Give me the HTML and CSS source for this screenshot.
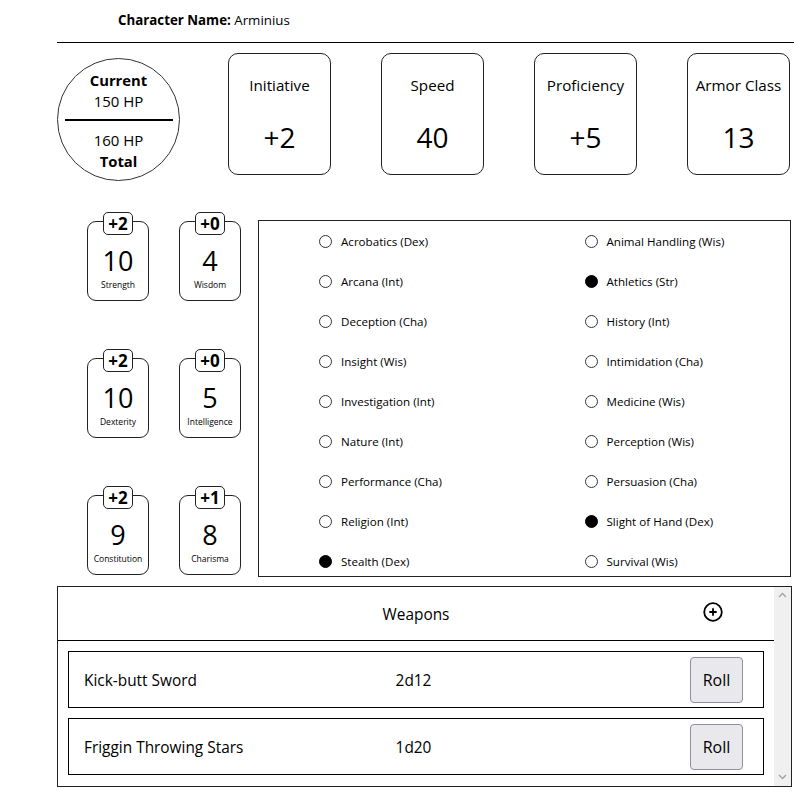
FILE: index.html
```html
<!DOCTYPE html>
<html lang="en">
<head>
<meta charset="utf-8">
<title>Character Sheet</title>
<link rel="stylesheet" href="styles.css">
</head>
<body>
<div class="page">
  <header class="name-bar"><span class="name-label">Character Name:</span> Arminius</header>

  <section class="top-row">
    <div class="hp">
      <b>Current</b>
      <span>150 HP</span>
      <div class="hp-line"></div>
      <span>160 HP</span>
      <b>Total</b>
    </div>
    <div class="stats">
      <div class="stat"><div class="stat-label">Initiative</div><div class="stat-value">+2</div></div>
      <div class="stat"><div class="stat-label">Speed</div><div class="stat-value">40</div></div>
      <div class="stat"><div class="stat-label">Proficiency</div><div class="stat-value">+5</div></div>
      <div class="stat"><div class="stat-label">Armor Class</div><div class="stat-value">13</div></div>
    </div>
  </section>

  <section class="mid-row">
    <div class="abilities">
      <div class="ability"><div class="mod">+2</div><div class="score">10</div><div class="ability-name">Strength</div></div>
      <div class="ability"><div class="mod">+0</div><div class="score">4</div><div class="ability-name">Wisdom</div></div>
      <div class="ability"><div class="mod">+2</div><div class="score">10</div><div class="ability-name">Dexterity</div></div>
      <div class="ability"><div class="mod">+0</div><div class="score">5</div><div class="ability-name">Intelligence</div></div>
      <div class="ability"><div class="mod">+2</div><div class="score">9</div><div class="ability-name">Constitution</div></div>
      <div class="ability"><div class="mod">+1</div><div class="score">8</div><div class="ability-name">Charisma</div></div>
    </div>
    <div class="skills">
      <div class="skill"><span class="radio"></span>Acrobatics (Dex)</div>
      <div class="skill"><span class="radio"></span>Animal Handling (Wis)</div>
      <div class="skill"><span class="radio"></span>Arcana (Int)</div>
      <div class="skill"><span class="radio on"></span>Athletics (Str)</div>
      <div class="skill"><span class="radio"></span>Deception (Cha)</div>
      <div class="skill"><span class="radio"></span>History (Int)</div>
      <div class="skill"><span class="radio"></span>Insight (Wis)</div>
      <div class="skill"><span class="radio"></span>Intimidation (Cha)</div>
      <div class="skill"><span class="radio"></span>Investigation (Int)</div>
      <div class="skill"><span class="radio"></span>Medicine (Wis)</div>
      <div class="skill"><span class="radio"></span>Nature (Int)</div>
      <div class="skill"><span class="radio"></span>Perception (Wis)</div>
      <div class="skill"><span class="radio"></span>Performance (Cha)</div>
      <div class="skill"><span class="radio"></span>Persuasion (Cha)</div>
      <div class="skill"><span class="radio"></span>Religion (Int)</div>
      <div class="skill"><span class="radio on"></span>Slight of Hand (Dex)</div>
      <div class="skill"><span class="radio on"></span>Stealth (Dex)</div>
      <div class="skill"><span class="radio"></span>Survival (Wis)</div>
    </div>
  </section>

  <section class="weapons">
    <div class="weapons-main">
      <div class="weapons-head">
        <span></span>
        <span class="weapons-title">Weapons</span>
        <svg class="add-icon" width="20" height="20" viewBox="0 0 20 20" aria-label="Add weapon">
          <circle cx="10" cy="10" r="8.8" fill="none" stroke="#000" stroke-width="1.8"/>
          <path d="M10 6.3V13.7M6.3 10H13.7" stroke="#000" stroke-width="1.8" fill="none"/>
        </svg>
      </div>
      <div class="weapon-list">
        <div class="weapon">
          <span class="weapon-name">Kick-butt Sword</span>
          <span class="weapon-dmg">2d12</span>
          <button class="roll">Roll</button>
        </div>
        <div class="weapon">
          <span class="weapon-name">Friggin Throwing Stars</span>
          <span class="weapon-dmg">1d20</span>
          <button class="roll">Roll</button>
        </div>
      </div>
    </div>
    <div class="scrollbar">
      <svg width="9" height="6" viewBox="0 0 9 6"><path d="M1 5L4.5 1.5L8 5" fill="none" stroke="#a3a3a3" stroke-width="1.4"/></svg>
      <svg width="9" height="6" viewBox="0 0 9 6"><path d="M1 1L4.5 4.5L8 1" fill="none" stroke="#a3a3a3" stroke-width="1.4"/></svg>
    </div>
  </section>
</div>
</body>
</html>
```

FILE: styles.css
```css
* { box-sizing: border-box; }

body {
  margin: 0;
  background: #fff;
  color: #000;
  font-family: "Open Sans", "Noto Sans", sans-serif;
}

.page {
  width: 794px;
  padding-left: 57px;
}

.name-bar {
  height: 43px;
  border-bottom: 1px solid #000;
  padding-left: 61px;
  padding-top: 10px;
  font-size: 13.3px;
  line-height: 20px;
}

.name-label { font-weight: 700; }

.top-row {
  display: flex;
  align-items: flex-start;
  margin-top: 10px;
}

.hp {
  width: 123px;
  height: 123px;
  margin-top: 5px;
  border: 1px solid #333;
  border-radius: 50%;
  display: flex;
  flex-direction: column;
  align-items: center;
  justify-content: center;
  font-size: 15px;
  line-height: 21px;
  padding-top: 3px;
}

.hp b { font-weight: 700; font-size: 14.8px; }

.hp-line {
  width: 108px;
  height: 2px;
  background: #000;
  margin: 7px 0 9px;
}

.stats {
  display: flex;
  gap: 50px;
  margin-left: 48px;
}

.stat {
  width: 103px;
  height: 122px;
  border: 1px solid #222;
  border-radius: 10px;
  text-align: center;
  padding-top: 20px;
}

.stat-label {
  font-size: 15.2px;
  line-height: 22px;
}

.stat-value {
  font-size: 28px;
  line-height: 36px;
  margin-top: 23px;
}

.mid-row {
  display: flex;
  align-items: flex-start;
  margin-top: 39px;
}

.abilities {
  display: grid;
  grid-template-columns: 62px 62px;
  column-gap: 30px;
  row-gap: 57px;
  margin-left: 30px;
  padding-top: 1px;
}

.ability {
  position: relative;
  height: 80px;
  border: 1px solid #222;
  border-radius: 9px;
  text-align: center;
  padding-top: 23px;
}

.mod {
  position: absolute;
  top: -10px;
  left: 50%;
  transform: translateX(-50%);
  width: 30px;
  height: 23px;
  background: #fff;
  border: 1px solid #222;
  border-radius: 5px;
  font-weight: 700;
  font-size: 17px;
  line-height: 21px;
}

.score {
  font-size: 27px;
  line-height: 32px;
}

.ability-name {
  font-size: 8.5px;
  line-height: 12px;
  margin-top: 2px;
}

.skills {
  margin-left: 17px;
  width: 533px;
  height: 357px;
  border: 1px solid #222;
  overflow: hidden;
  display: grid;
  grid-template-columns: 1fr 1fr;
  grid-auto-rows: 40px;
}

.skill {
  display: flex;
  align-items: center;
  gap: 9px;
  padding-left: 60px;
  font-size: 11.6px;
}

.radio {
  width: 13px;
  height: 13px;
  flex: none;
  border: 1px solid #333;
  border-radius: 50%;
}

.radio.on {
  background: #000;
  border-color: #000;
}

.weapons {
  display: flex;
  margin-top: 9px;
  width: 735px;
  height: 201px;
  border: 1px solid #222;
}

.weapons-main {
  flex: 1;
  display: flex;
  flex-direction: column;
}

.weapons-head {
  height: 54px;
  border-bottom: 1px solid #000;
  display: grid;
  grid-template-columns: 1fr auto 1fr;
  align-items: center;
  font-size: 15.4px;
  padding-top: 1px;
}

.add-icon {
  justify-self: end;
  margin-right: 51px;
  margin-top: -4px;
}

.weapon-list {
  padding: 10px;
  display: flex;
  flex-direction: column;
  gap: 10px;
}

.weapon {
  height: 57px;
  border: 1px solid #000;
  display: grid;
  grid-template-columns: 1fr auto 1fr;
  align-items: center;
  padding: 1px 20px 0 15px;
  font-size: 15.4px;
}

.roll {
  justify-self: end;
  width: 53px;
  height: 46px;
  margin-top: -1px;
  background: #e9e9ed;
  border: 1px solid #8f8f9d;
  border-radius: 4px;
  font-family: inherit;
  font-size: 16px;
  color: #000;
  padding: 0;
}

.scrollbar {
  width: 17px;
  background: #f0f0f0;
  display: flex;
  flex-direction: column;
  justify-content: space-between;
  align-items: center;
  padding: 5px 0 6px;
}

.scrollbar svg { display: block; }
```
